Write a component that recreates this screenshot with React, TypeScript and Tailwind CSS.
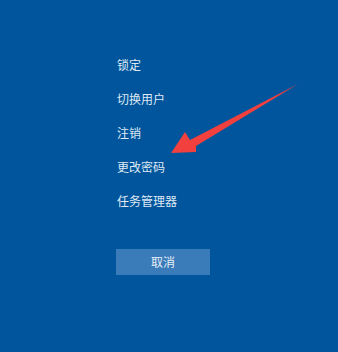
const items = ['锁定', '切换用户', '注销', '更改密码', '任务管理器'];

export default function App() {
  return (
    <div
      className="relative h-[352px] w-[338px] overflow-hidden bg-[#00559c] pl-[117px] pt-[56px] text-[#dfe9f4]"
      style={{ fontFamily: '"Noto Sans CJK SC", "Noto Sans", sans-serif' }}
    >
      <ul className="flex flex-col gap-[17px]">
        {items.map((label) => (
          <li key={label} className="h-[17px] text-[12px] leading-[17px]">
            {label}
          </li>
        ))}
      </ul>
      <button
        type="button"
        className="mt-[40px] -ml-px flex h-[26px] w-[94px] items-center justify-center bg-[#3a7bb9] text-[12px] text-[#e6eef7]"
      >
        取消
      </button>
      <svg className="pointer-events-none absolute inset-0" width="338" height="352" viewBox="0 0 338 352">
        <polygon points="171,153 185,132 190,140 298,84 196,146 196,152" fill="#f2403f" />
      </svg>
    </div>
  );
}
